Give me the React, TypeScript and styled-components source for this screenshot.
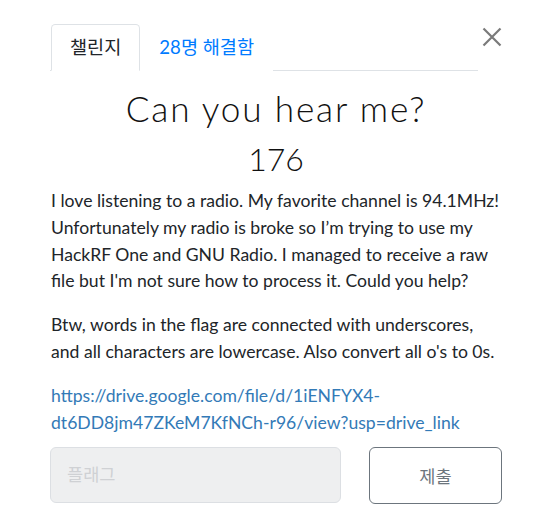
import React from "react";
import styled, { createGlobalStyle } from "styled-components";

const Global = createGlobalStyle`
  html, body { margin: 0; padding: 0; background: #fff; }
  body {
    font-family: Lato, "Noto Sans CJK KR", sans-serif;
    color: #212529;
    font-size: 17.6px;
    line-height: 26.6px;
  }
  * { box-sizing: border-box; }
`;

const Modal = styled.div`
  width: 551px;
  padding: 24px 49px 0 50px;
`;

const Header = styled.div`
  display: flex;
  align-items: flex-start;
  gap: 4px;
`;

const Tabs = styled.ul`
  flex: 1;
  display: flex;
  list-style: none;
  margin: 0;
  padding: 0 0 0 1px;
  border-bottom: 1px solid #dee2e6;
`;

const Tab = styled.li<{ $active?: boolean }>`
  margin-bottom: -1px;
  padding: 9px 18px 9px;
  border: 1px solid ${(p) => (p.$active ? "#dee2e6" : "transparent")};
  border-bottom-color: ${(p) => (p.$active ? "#fff" : "transparent")};
  border-radius: 4.4px 4.4px 0 0;
  background: #fff;
  color: ${(p) => (p.$active ? "#212529" : "#007bff")};
  font-family: Lato, "Noto Sans CJK KR", sans-serif;
  font-size: 18.6px;
  line-height: 26.6px;
  white-space: nowrap;
`;

const Close = styled.button`
  border: 0;
  background: none;
  padding: 0;
  margin: 3px 0 0 0;
  width: 20px;
  height: 20px;
  display: flex;
  align-items: center;
  justify-content: center;
  cursor: pointer;
`;

const Title = styled.h2`
  margin: 16px 0 8.8px;
  text-align: center;
  font-family: Lato, sans-serif;
  font-weight: 300;
  font-size: 35.2px;
  line-height: 1.2;
  letter-spacing: 1.8px;
  color: #111;
`;

const Points = styled.h3`
  margin: 0 0 8.8px;
  text-align: center;
  font-family: Lato, sans-serif;
  font-weight: 300;
  font-size: 32px;
  line-height: 42px;
  color: #111;
`;

const Description = styled.div`
  padding-left: 1px;
  p {
    margin: 0 0 17.6px;
  }
  a {
    color: #337ab7;
    text-decoration: none;
  }
`;

const SubmitRow = styled.div`
  display: grid;
  grid-template-columns: 291px 133px;
  gap: 28px;
  margin-top: -7px;
`;

const FlagInput = styled.input`
  height: 56px;
  width: 100%;
  padding: 0 16px;
  border: 1px solid #dcdfe3;
  border-radius: 6px;
  background: #eeeff0;
  font-family: Lato, "Noto Sans CJK KR", sans-serif;
  font-size: 17.6px;
  color: #495057;
  &::placeholder { color: #cfd1d4; }
`;

const SubmitButton = styled.button`
  height: 57px;
  border: 1px solid #6c757d;
  border-radius: 6px;
  background: #fff;
  color: #6c757d;
  font-family: Lato, "Noto Sans CJK KR", sans-serif;
  font-size: 17.6px;
`;

export default function App() {
  return (
    <>
      <Global />
      <Modal>
        <Header>
          <Tabs>
            <Tab $active>챌린지</Tab>
            <Tab>28명 해결함</Tab>
          </Tabs>
          <Close aria-label="Close">
            <svg width="20" height="20" viewBox="0 0 20 20">
              <path d="M1.5 1.5 L18.5 18.5 M18.5 1.5 L1.5 18.5" stroke="#7a7a7a" strokeWidth="2.2" />
            </svg>
          </Close>
        </Header>
        <Title>Can you hear me?</Title>
        <Points>176</Points>
        <Description>
          <p>
            I love listening to a radio. My favorite channel is 94.1MHz! Unfortunately my radio is broke so I’m trying to use my HackRF One and GNU Radio. I managed to receive a raw file but I'm not sure how to process it. Could you help?
          </p>
          <p>
            Btw, words in the flag are connected with underscores, and all characters are lowercase. Also convert all o's to 0s.
          </p>
          <p>
            <a href="#">https://drive.google.com/file/d/1iENFYX4-dt6DD8jm47ZKeM7KfNCh-r96/view?usp=drive_link</a>
          </p>
        </Description>
        <SubmitRow>
          <FlagInput placeholder="플래그" />
          <SubmitButton>제출</SubmitButton>
        </SubmitRow>
      </Modal>
    </>
  );
}
